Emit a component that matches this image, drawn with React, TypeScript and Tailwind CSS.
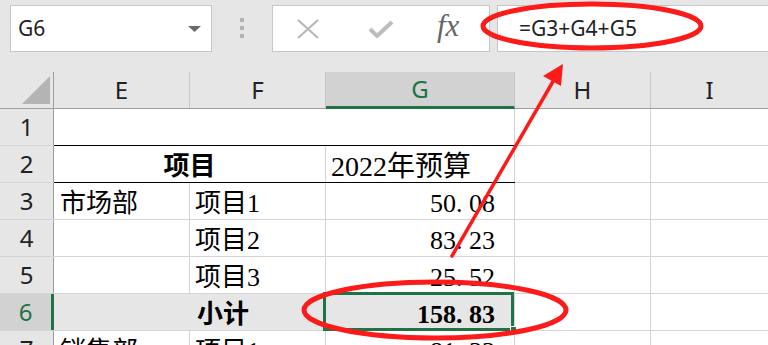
import type { ReactNode } from 'react';

const CELL_FONT = "font-['Liberation_Serif','Noto_Sans_CJK_SC',serif]";
const UI_FONT = "font-['Noto_Sans','Liberation_Sans',sans-serif]";

// SimSun style half-width period: pad the dot out to half an em
function Num({ value }: { value: string }) {
  const [a, b] = value.split('.');
  return (
    <span>
      {a}
      <span className="inline-block w-[0.5em]">.</span>
      {b}
    </span>
  );
}

type CellProps = {
  w: string;
  children?: ReactNode;
  className?: string;
};

function Cell({ w, children, className = '' }: CellProps) {
  return (
    <div className={`flex h-full shrink-0 items-center border-r border-[#d4d4d4] ${w} ${className}`}>
      {children}
    </div>
  );
}

function RowHead({ n, active }: { n: number; active?: boolean }) {
  return (
    <div
      className={`flex h-full w-[54px] shrink-0 items-center justify-center text-[24px] ${UI_FONT} ${
        active
          ? 'border-r-[3px] border-[#217346] bg-[#d2d2d2] text-[#217346]'
          : 'border-r border-[#9e9e9e] bg-[#e6e6e6] text-[#222]'
      }`}
    >
      {n}
    </div>
  );
}

function Row({ children }: { children: ReactNode }) {
  return <div className="flex h-[37px] border-b border-[#d4d4d4]">{children}</div>;
}

export default function App() {
  return (
    <div className="relative h-[345px] w-[768px] overflow-hidden bg-white">
      {/* formula bar */}
      <div className={`flex h-[72px] items-start bg-[#e6e6e6] pt-[5px] ${UI_FONT}`}>
        <div className="ml-[10px] flex h-[47px] w-[202px] items-center justify-between border border-[#c6c6c6] bg-white pl-[7px] pr-[10px]">
          <span className="text-[21px] text-[#222]">G6</span>
          <svg width="13" height="6" viewBox="0 0 13 6">
            <path d="M0 0 L13 0 L6.5 6 Z" fill="#6a6a6a" />
          </svg>
        </div>
        <div className="ml-[28px] mt-[13px] flex flex-col gap-[4px]">
          <span className="h-[4px] w-[4px] bg-[#b2b2b2]" />
          <span className="h-[4px] w-[4px] bg-[#b2b2b2]" />
          <span className="h-[4px] w-[4px] bg-[#b2b2b2]" />
        </div>
        <div className="ml-[28px] flex h-[47px] w-[218px] items-center border border-[#c6c6c6] bg-white">
          <svg className="ml-[23px]" width="24" height="20" viewBox="0 0 24 20">
            <path d="M2 1 L22 19 M22 1 L2 19" stroke="#b8b8b8" strokeWidth="2.2" />
          </svg>
          <svg className="ml-[48px]" width="26" height="18" viewBox="0 0 26 18">
            <path d="M2 9 L9 16 L24 2" stroke="#bdbdbd" strokeWidth="4" fill="none" />
          </svg>
          <span className="ml-[43px] -mt-[4px] font-['Liberation_Serif',serif] text-[31px] italic text-[#666]">
            fx
          </span>
        </div>
        <div className="ml-[7px] flex h-[47px] flex-1 items-center border border-r-0 border-[#c6c6c6] bg-white pl-[21px]">
          <span className="text-[21px] text-[#222]">=G3+G4+G5</span>
        </div>
      </div>

      {/* column headers */}
      <div className={`flex h-[37px] border-b border-[#9e9e9e] bg-[#e6e6e6] text-[24px] text-[#222] ${UI_FONT}`}>
        <div className="relative w-[54px] shrink-0 border-r border-[#9e9e9e]">
          <svg className="absolute left-[22px] top-[4px]" width="28" height="28" viewBox="0 0 28 28">
            <path d="M28 0 L28 28 L0 28 Z" fill="#b4b4b4" />
          </svg>
        </div>
        <div className="flex w-[136px] shrink-0 items-center justify-center border-r border-[#c6c6c6]">E</div>
        <div className="flex w-[136px] shrink-0 items-center justify-center border-r border-[#c6c6c6]">F</div>
        <div className="-mb-px flex w-[189px] shrink-0 items-center justify-center border-b-[3px] border-r border-b-[#217346] border-r-[#c6c6c6] bg-[#d2d2d2] text-[#217346]">
          G
        </div>
        <div className="flex w-[136px] shrink-0 items-center justify-center border-r border-[#c6c6c6]">H</div>
        <div className="flex flex-1 items-center justify-center">I</div>
      </div>

      {/* sheet */}
      <div className={`text-[26px] leading-none text-black ${CELL_FONT}`}>
        <div className="flex h-[37px]">
          <div className="h-full border-b border-[#d4d4d4]">
            <RowHead n={1} />
          </div>
          <div className="h-full w-[461px] shrink-0 border-b border-r border-b-black border-r-[#d4d4d4]" />
          <div className="h-full w-[136px] shrink-0 border-b border-r border-[#d4d4d4]" />
          <div className="h-full flex-1 border-b border-[#d4d4d4]" />
        </div>

        <div className="flex h-[37px]">
          <div className="h-full border-b border-[#d4d4d4]">
            <RowHead n={2} />
          </div>
          <div className="flex h-full border-b border-black">
            <Cell w="w-[272px]" className="justify-center pt-[5px] font-bold">
              项目
            </Cell>
            <Cell w="w-[189px]" className="pl-[5px] pt-[5px] text-[28px]">
              2022年预算
            </Cell>
          </div>
          <div className="flex h-full flex-1 border-b border-[#d4d4d4]">
            <Cell w="w-[136px]" />
          </div>
        </div>

        <Row>
          <RowHead n={3} />
          <Cell w="w-[136px]" className="pl-[6px] pt-[5px]">
            市场部
          </Cell>
          <Cell w="w-[136px]" className="pl-[5px] pt-[5px]">
            项目1
          </Cell>
          <Cell w="w-[189px]" className="justify-end pr-[19px] pt-[5px]">
            <Num value="50.08" />
          </Cell>
          <Cell w="w-[136px]" />
        </Row>

        <Row>
          <RowHead n={4} />
          <Cell w="w-[136px]" />
          <Cell w="w-[136px]" className="pl-[5px] pt-[5px]">
            项目2
          </Cell>
          <Cell w="w-[189px]" className="justify-end pr-[19px] pt-[5px]">
            <Num value="83.23" />
          </Cell>
          <Cell w="w-[136px]" />
        </Row>

        <Row>
          <RowHead n={5} />
          <Cell w="w-[136px]" />
          <Cell w="w-[136px]" className="pl-[5px] pt-[5px]">
            项目3
          </Cell>
          <Cell w="w-[189px]" className="justify-end pr-[19px] pt-[5px]">
            <Num value="25.52" />
          </Cell>
          <Cell w="w-[136px]" />
        </Row>

        <Row>
          <RowHead n={6} active />
          {/* filled cells hide their gridlines */}
          <Cell w="w-[136px]" className="border-[#e6e6e6] bg-[#e6e6e6]" />
          <Cell w="w-[136px]" className="bg-[#e6e6e6] pl-[7px] pt-[5px] font-bold">
            小计
          </Cell>
          <div className="relative flex h-full w-[189px] shrink-0 items-center justify-end border-r border-[#d4d4d4] bg-[#e6e6e6] pr-[19px] pt-[5px] font-bold">
            <Num value="158.83" />
            <div className="absolute -left-[3px] -top-[2px] h-[39px] w-[191px] border-[3px] border-[#217346]" />
            <div className="absolute -bottom-[3px] -right-[3px] h-[7px] w-[7px] border border-white bg-[#217346]" />
          </div>
          <Cell w="w-[136px]" />
        </Row>

        <Row>
          <RowHead n={7} />
          <Cell w="w-[136px]" className="pl-[6px] pt-[5px]">
            销售部
          </Cell>
          <Cell w="w-[136px]" className="pl-[5px] pt-[5px]">
            项目1
          </Cell>
          <Cell w="w-[189px]" className="justify-end pr-[19px] pt-[5px]">
            <Num value="81.33" />
          </Cell>
          <Cell w="w-[136px]" />
        </Row>
      </div>

      {/* red hand-drawn annotations */}
      <svg className="pointer-events-none absolute left-0 top-0" width="768" height="345" viewBox="0 0 768 345">
        <ellipse cx="592" cy="26" rx="109" ry="22" fill="none" stroke="#fb1b1b" strokeWidth="5" />
        <ellipse cx="435" cy="310" rx="131" ry="28" fill="none" stroke="#fb1b1b" strokeWidth="5" />
        <path d="M452 256 L555 78" stroke="#fb1b1b" strokeWidth="3.5" strokeLinecap="round" />
        <path d="M563 64 L543 76 L561 86 Z" fill="#fb1b1b" />
      </svg>
    </div>
  );
}
